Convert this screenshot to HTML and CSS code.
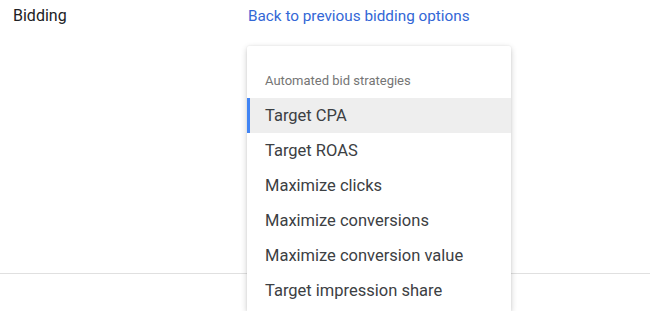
FILE: index.html
```html
<!DOCTYPE html>
<html lang="en-US">
  <head>
    <title>Bidding</title>
    <meta name="viewport" content="width=device-width, initial-scale=1" />
    <link rel="stylesheet" href="styles.css">
  </head>
  <body>
    <section class="setting">
      <p class="setting-label">Bidding</p>
      <div class="setting-body">
        <a class="link" href="#">Back to previous bidding options</a>
        <div class="menu">
          <p class="menu-header">Automated bid strategies</p>
          <ul class="menu-list">
            <li class="menu-item selected">Target CPA</li>
            <li class="menu-item">Target ROAS</li>
            <li class="menu-item">Maximize clicks</li>
            <li class="menu-item">Maximize conversions</li>
            <li class="menu-item">Maximize conversion value</li>
            <li class="menu-item">Target impression share</li>
          </ul>
        </div>
      </div>
    </section>
  </body>
</html>
```

FILE: styles.css
```css
html,
body {
  height: 100%;
}
body {
  margin: 0;
  min-height: 311px;
  font-family: Roboto, "Noto Sans", sans-serif;
  background: #fff;
  overflow: hidden;
}
.setting {
  display: grid;
  grid-template-columns: 235px 1fr;
  padding: 6px 0 0 13px;
  height: 267px;
  border-bottom: 1px solid #e0e0e0;
}
.setting-label {
  margin: 0;
  font-size: 16px;
  line-height: 20px;
  color: #202124;
}
.setting-body {
  position: relative;
}
.link {
  font-size: 15.3px;
  line-height: 20px;
  color: #3367d6;
  text-decoration: none;
}
.menu {
  position: absolute;
  top: 40px;
  left: -1px;
  width: 264px;
  height: 249px;
  padding-top: 16px;
  overflow: hidden;
  background: #fff;
  border-radius: 2px 2px 0 0;
  box-shadow: 0 2px 6px rgba(0, 0, 0, 0.2), 0 0 2px rgba(0, 0, 0, 0.08);
}
.menu-header {
  margin: 0;
  padding-left: 18px;
  height: 36px;
  line-height: 38px;
  font-size: 13px;
  color: #757575;
}
.menu-list {
  list-style: none;
  margin: 0;
  padding: 0;
}
.menu-item {
  height: 35px;
  line-height: 35px;
  padding-left: 15px;
  font-size: 16.5px;
  color: #3c4043;
  border-left: 3px solid transparent;
}
.menu-item.selected {
  background: #eeeeee;
  border-left-color: #4285f4;
}
```
